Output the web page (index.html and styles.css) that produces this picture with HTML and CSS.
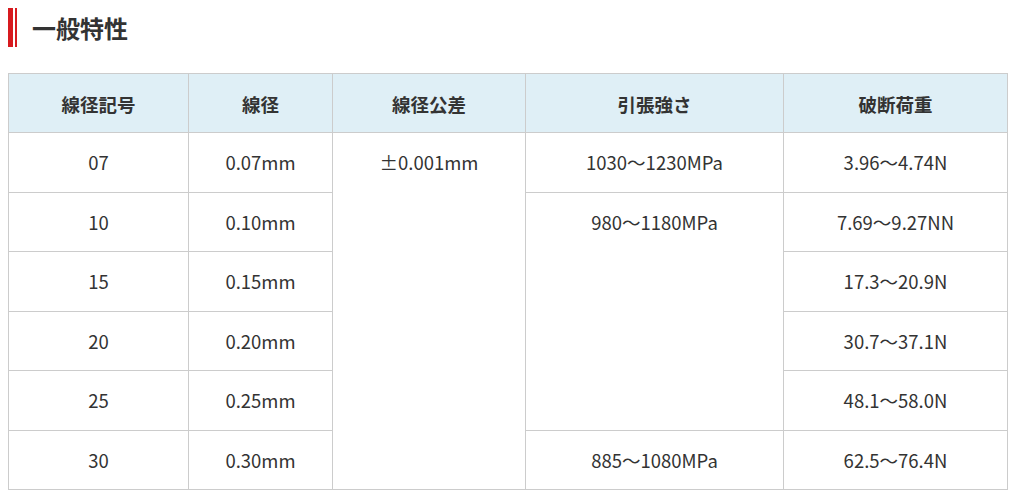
FILE: index.html
```
<!DOCTYPE html>
<html lang="ja">
<head>
<meta charset="utf-8">
<link rel="stylesheet" href="styles.css">
</head>
<body>
<h2 class="heading"><span class="bar-thick"></span><span class="bar-thin"></span><span class="heading-text">一般特性</span></h2>
<table class="spec">
<colgroup><col class="c1"><col class="c2"><col class="c3"><col class="c4"><col class="c5"></colgroup>
<thead>
<tr><th>線径記号</th><th>線径</th><th>線径公差</th><th>引張強さ</th><th>破断荷重</th></tr>
</thead>
<tbody>
<tr><td>07</td><td>0.07mm</td><td rowspan="6">±0.001mm</td><td>1030〜1230MPa</td><td>3.96〜4.74N</td></tr>
<tr><td>10</td><td>0.10mm</td><td rowspan="4">980〜1180MPa</td><td>7.69〜9.27NN</td></tr>
<tr><td>15</td><td>0.15mm</td><td>17.3〜20.9N</td></tr>
<tr><td>20</td><td>0.20mm</td><td>30.7〜37.1N</td></tr>
<tr><td>25</td><td>0.25mm</td><td>48.1〜58.0N</td></tr>
<tr><td>30</td><td>0.30mm</td><td>885〜1080MPa</td><td>62.5〜76.4N</td></tr>
</tbody>
</table>
</body>
</html>
```
FILE: styles.css
```
body {
  margin: 8px;
  background: #fff;
  color: #333;
  font-family: "Noto Sans CJK JP", "Noto Sans", sans-serif;
}
.heading {
  display: flex;
  align-items: center;
  height: 39px;
  margin: 0 0 26px 0;
  font-size: 24px;
  font-weight: bold;
  color: #333;
}
.bar-thick {
  width: 5px;
  height: 39px;
  background: #d71a1f;
}
.bar-thin {
  width: 2px;
  height: 39px;
  margin-left: 2px;
  background: #d71a1f;
}
.heading-text {
  margin-left: 15px;
  line-height: 39px;
}
.spec {
  width: 999px;
  table-layout: fixed;
  border-collapse: collapse;
  font-size: 18.5px;
  color: #333;
}
.spec th, .spec td {
  border: 1px solid #ccc;
  text-align: center;
  vertical-align: top;
  padding: 16px 8px 16.5px;
  line-height: 26px;
}
.spec th {
  background: #dfeff6;
  font-weight: bold;
  padding-top: 17px;
  padding-bottom: 15px;
}
.c1 { width: 180px; }
.c2 { width: 144px; }
.c3 { width: 193px; }
.c4 { width: 258px; }
.c5 { width: 224px; }
```
